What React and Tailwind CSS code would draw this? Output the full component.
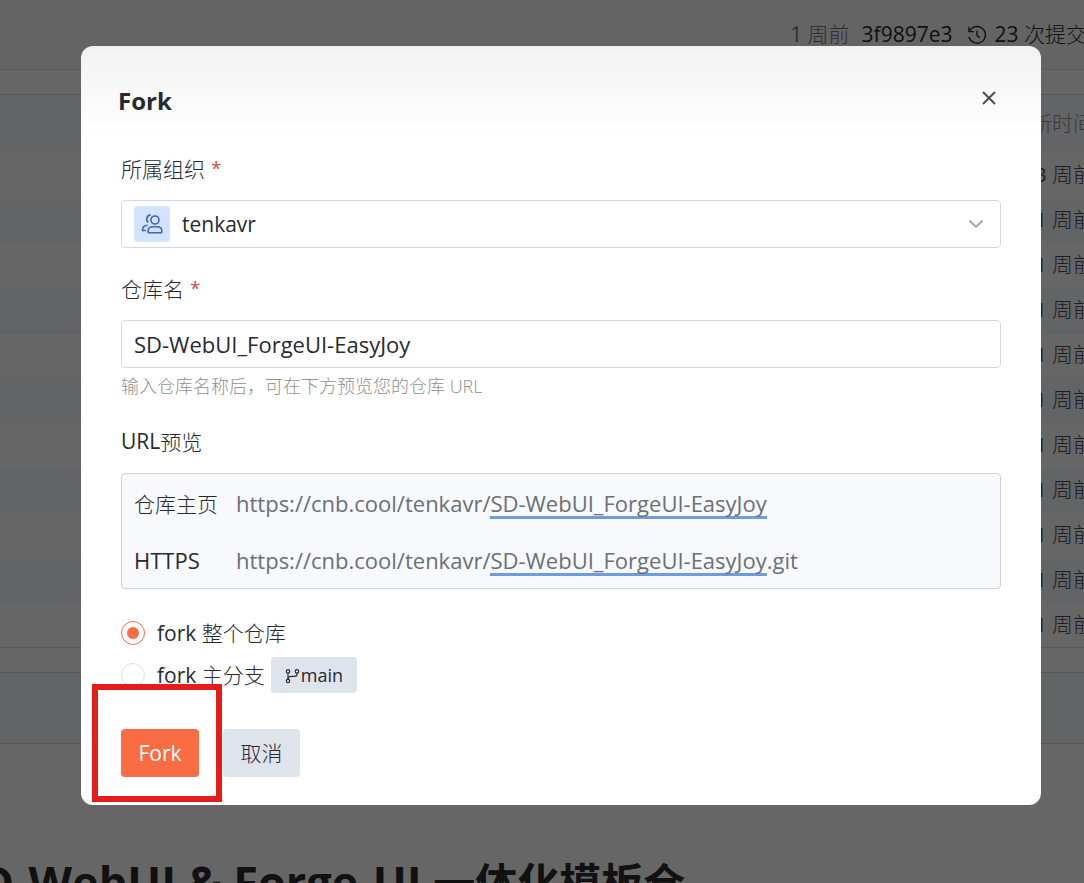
import { useState } from 'react';

const LATIN = "font-['Open_Sans','Noto_Sans_CJK_SC',sans-serif]";
const CJK = "font-['Noto_Sans_CJK_SC',sans-serif] text-[21px] leading-none font-light";

const rows = ['3 周前', '1 周前', '1 周前', '1 周前', '1 周前', '1 周前', '1 周前', '1 周前', '1 周前', '1 周前', '1 周前'];

function Han({ children }) {
  return <span className={CJK}>{children}</span>;
}

function HistoryIcon() {
  return (
    <svg className="size-5" viewBox="0 0 20 20" fill="none" stroke="currentColor" strokeWidth="1.4" aria-hidden="true">
      <path d="M2.6 6.2A8.3 8.3 0 1 1 2 11.8" />
      <path d="M2 1.8v4.8h4.8" />
      <path d="M10 5.6v4.9l3 2.3" />
    </svg>
  );
}

function MembersIcon() {
  return (
    <svg className="size-6" viewBox="0 0 24 24" fill="none" stroke="currentColor" strokeWidth="1.6" aria-hidden="true">
      <circle cx="15" cy="8" r="4" />
      <path d="M8.2 20.2v-1.600c0-2.400 2.200-3.900 4.700-3.900h4.200c2.600 0 4.700 1.500 4.700 3.900v1.600c0 .4-.2.600-.6.600H8.800c-.4 0-.6-.2-.6-.6z" />
      <path d="M10.600 2.900A4.200 4.200 0 0 0 8.200 10.300" />
      <path d="M7.600 13.300c-3 .2-5 1.600-5 4v1.200h3.300" />
    </svg>
  );
}

function BranchIcon() {
  return (
    <svg className="mt-0.5 size-4" viewBox="0 0 16 16" fill="none" stroke="currentColor" strokeWidth="1.2" aria-hidden="true">
      <circle cx="3" cy="3.400" r="1.700" />
      <circle cx="3" cy="13" r="1.700" />
      <circle cx="12" cy="3.400" r="1.700" />
      <path d="M3 5.100v6.200" />
      <path d="M12 5.100v1.200c0 1.500-.8 2.100-2.200 2.100H6c-1.700 0-3 .9-3 2.900" />
    </svg>
  );
}

function RepositoryPage() {
  return (
    <main className="-ml-11 w-[calc(100%+68px)] bg-white pb-10">
      <div className="flex h-[70px] items-center justify-end border-b border-[#e3e3e3] bg-[#f9fafd] pr-[21px] text-[21px] whitespace-nowrap text-[#2b2b2b]">
        <span className="mr-3 text-[#757575]">1 <Han>周前</Han></span>
        <a href="#commit" className="mr-3.5">3f9897e3</a>
        <a href="#commits" className="flex items-center gap-2">
          <HistoryIcon />
          <span>23 <Han>次提交</Han></span>
        </a>
      </div>
      <table className="mt-6 w-full border-y border-[#dcdcdc] text-right text-[20px]">
        <thead>
          <tr className="h-[58px] bg-[#f8fafc] text-[#929292]">
            <th className="pr-3.5 font-normal"><Han>更新时间</Han></th>
          </tr>
        </thead>
        <tbody className="text-[#4f4f4f]">
          {rows.map((time, i) => (
            <tr key={i} className="h-[45px] odd:bg-white even:bg-[#f8fafc]">
              <td className="pr-3.5">{time.slice(0, 2)}<Han>{time.slice(2)}</Han></td>
            </tr>
          ))}
        </tbody>
      </table>
      <div className="mt-6 h-[72px] border-y border-[#dcdcdc] bg-[#f8fafc]" />
      <h1 className="mt-[108px] text-[45px] leading-[60px] font-bold whitespace-nowrap text-[#2b2b2b]">
        SD-WebUI &amp; Forge-UI <span className="text-[42px]">一体化模板仓</span>
      </h1>
    </main>
  );
}

function UrlRow({ label, name, suffix }) {
  return (
    <div className="flex h-[30px] text-[22px] leading-[28px]">
      <dt className="w-[102px] shrink-0">{label}</dt>
      <dd className="flex text-[#6b7075]">
        https://cnb.cool/tenkavr/
        <span className="border-b-3 border-[#6c9de0]">{name}</span>
        {suffix}
      </dd>
    </div>
  );
}

function ForkDialog() {
  const [name, setName] = useState('SD-WebUI_ForgeUI-EasyJoy');
  const [scope, setScope] = useState('all');
  const radio =
    "relative size-6 shrink-0 appearance-none rounded-full border border-[#dde1e6] bg-white checked:border-[#f96c44] before:absolute before:inset-[5px] before:rounded-full checked:before:bg-[#f96c44]";

  return (
    <form
      role="dialog"
      aria-labelledby="fork-title"
      onSubmit={(e) => e.preventDefault()}
      className="w-full rounded-xl bg-white bg-linear-to-b from-[#f2f2f2] to-white to-[90px] px-10 pb-7 text-[21px] leading-[30px] text-[#262a30]"
    >
      <header className="-mx-[3px] flex items-start justify-between pt-10">
        <h2 id="fork-title" className="text-[24px] font-bold">Fork</h2>
        <button type="button" aria-label="关闭" className="flex h-6 w-[30px] items-center justify-center text-[#4b4b4b]">
          <svg className="size-3.5" viewBox="0 0 14 14" stroke="currentColor" strokeWidth="1.9" aria-hidden="true">
            <path d="M1 1l12 12M13 1L1 13" />
          </svg>
        </button>
      </header>

      <label htmlFor="org" className="mt-[37px] flex h-[30px] items-center gap-1.5">
        <Han>所属组织</Han><span className="text-[19px] text-[#d54941]">*</span>
      </label>
      <div className="mt-[17px] flex h-12 items-center rounded border border-[#d5d9dd] bg-white px-3">
        <span className="flex size-9 items-center justify-center rounded bg-[#d3e3ff] text-[#3868b8]">
          <MembersIcon />
        </span>
        <select id="org" className="ml-3 flex-1 appearance-none outline-none">
          <option>tenkavr</option>
        </select>
        <svg className="mr-1 h-2.5 w-4" viewBox="0 0 16 10" fill="none" stroke="#a6a6a6" strokeWidth="1.9" aria-hidden="true">
          <path d="M1.500 1.500L8 8l6.500-6.500" />
        </svg>
      </div>

      <label htmlFor="repo" className="mt-[25px] flex h-[30px] items-center gap-1.5">
        <Han>仓库名</Han><span className="text-[19px] text-[#d54941]">*</span>
      </label>
      <input
        id="repo"
        type="text"
        value={name}
        onChange={(e) => setName(e.target.value)}
        className="mt-[17px] h-12 w-full rounded border border-[#d5d9dd] bg-white px-3 text-[22px] outline-none"
      />
      <p className="mt-1 text-[18px] leading-7 font-light text-[#909090]">
        输入仓库名称后，可在下方预览您的仓库 URL
      </p>

      <h3 className="mt-[26px] flex h-[30px] items-center">URL<Han>预览</Han></h3>
      <dl className="mt-[17px] flex flex-col gap-[27px] rounded border border-[#cfd3d8] bg-[#f7f9fd] px-3 pt-[15px] pb-3">
        <UrlRow label={<Han>仓库主页</Han>} name={name} />
        <UrlRow label="HTTPS" name={name} suffix=".git" />
      </dl>

      <div className="mt-[29px] flex flex-col gap-[9px]">
        <label className="flex h-[30px] items-center gap-3">
          <input type="radio" name="scope" checked={scope === 'all'} onChange={() => setScope('all')} className={radio} />
          <span>fork <Han>整个仓库</Han></span>
        </label>
        <label className="flex h-9 items-center gap-3">
          <input type="radio" name="scope" checked={scope === 'main'} onChange={() => setScope('main')} className={radio} />
          <span className="flex items-center gap-1.5">
            <span>fork <Han>主分支</Han></span>
            <span className="flex h-9 items-center rounded bg-[#dfe4ec] px-3.5 text-[18px]">
              <BranchIcon />main
            </span>
          </span>
        </label>
      </div>

      <footer className="mt-9 flex gap-6">
        <div className="relative">
          <button type="submit" className="h-12 w-[78px] rounded bg-[#f96c44] text-white">Fork</button>
          <span className="pointer-events-none absolute -top-[45px] -right-[23px] -bottom-[25px] -left-[29px] border-6 border-[#e51c1c]" />
        </div>
        <button type="button" className="h-12 w-[77px] rounded bg-[#dfe4ec]"><Han>取消</Han></button>
      </footer>
    </form>
  );
}

export default function App() {
  return (
    <div className={`relative h-screen overflow-hidden ${LATIN}`}>
      <RepositoryPage />
      <div className="absolute inset-0 flex items-start bg-black/60 pt-[46px] pr-[43px] pl-[81px]">
        <ForkDialog />
      </div>
    </div>
  );
}
